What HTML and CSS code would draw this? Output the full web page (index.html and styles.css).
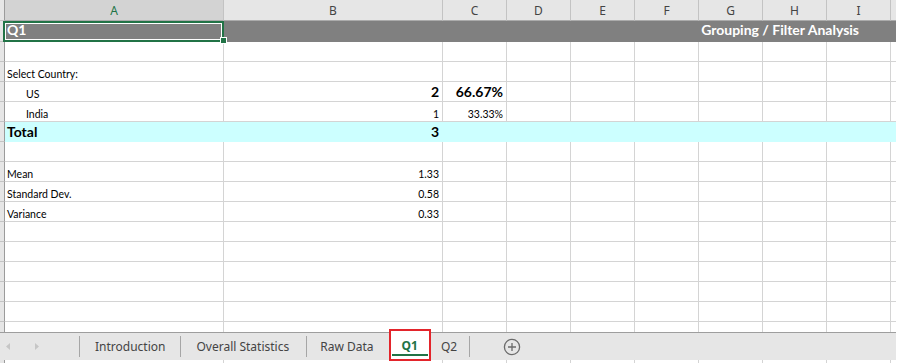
FILE: index.html
```html
<!DOCTYPE html>
<html lang="en">
<head>
  <meta charset="UTF-8" />
  <title>Q1 - Grouping / Filter Analysis</title>
  <link rel="stylesheet" href="styles.css">
</head>
<body>
  <div class="sheet">
    <!-- column headers -->
    <div class="row head">
      <div class="rh"></div>
      <div class="sel-col">A</div>
      <div>B</div>
      <div>C</div>
      <div>D</div>
      <div>E</div>
      <div>F</div>
      <div>G</div>
      <div>H</div>
      <div>I</div>
      <div></div>
    </div>

    <!-- title row -->
    <div class="row title">
      <div class="rh"></div>
      <div class="c sel">Q1</div>
      <div class="c span num">Grouping / Filter Analysis</div>
    </div>

    <div class="row"><div class="rh"></div><div class="c"></div><div class="c"></div><div class="c"></div><div class="c"></div><div class="c"></div><div class="c"></div><div class="c"></div><div class="c"></div><div class="c"></div><div class="c"></div></div>

    <div class="row"><div class="rh"></div><div class="c">Select Country:</div><div class="c"></div><div class="c"></div><div class="c"></div><div class="c"></div><div class="c"></div><div class="c"></div><div class="c"></div><div class="c"></div><div class="c"></div></div>

    <div class="row"><div class="rh"></div><div class="c indent">US</div><div class="c num big">2</div><div class="c num big">66.67%</div><div class="c"></div><div class="c"></div><div class="c"></div><div class="c"></div><div class="c"></div><div class="c"></div><div class="c"></div></div>

    <div class="row"><div class="rh"></div><div class="c indent">India</div><div class="c num">1</div><div class="c num">33.33%</div><div class="c"></div><div class="c"></div><div class="c"></div><div class="c"></div><div class="c"></div><div class="c"></div><div class="c"></div></div>

    <div class="row total"><div class="rh"></div><div class="c big">Total</div><div class="c num big">3</div><div class="c"></div><div class="c"></div><div class="c"></div><div class="c"></div><div class="c"></div><div class="c"></div><div class="c"></div><div class="c"></div></div>

    <div class="row"><div class="rh"></div><div class="c"></div><div class="c"></div><div class="c"></div><div class="c"></div><div class="c"></div><div class="c"></div><div class="c"></div><div class="c"></div><div class="c"></div><div class="c"></div></div>

    <div class="row"><div class="rh"></div><div class="c">Mean</div><div class="c num">1.33</div><div class="c"></div><div class="c"></div><div class="c"></div><div class="c"></div><div class="c"></div><div class="c"></div><div class="c"></div><div class="c"></div></div>

    <div class="row"><div class="rh"></div><div class="c">Standard Dev.</div><div class="c num">0.58</div><div class="c"></div><div class="c"></div><div class="c"></div><div class="c"></div><div class="c"></div><div class="c"></div><div class="c"></div><div class="c"></div></div>

    <div class="row"><div class="rh"></div><div class="c">Variance</div><div class="c num">0.33</div><div class="c"></div><div class="c"></div><div class="c"></div><div class="c"></div><div class="c"></div><div class="c"></div><div class="c"></div><div class="c"></div></div>

    <div class="row"><div class="rh"></div><div class="c"></div><div class="c"></div><div class="c"></div><div class="c"></div><div class="c"></div><div class="c"></div><div class="c"></div><div class="c"></div><div class="c"></div><div class="c"></div></div>
    <div class="row"><div class="rh"></div><div class="c"></div><div class="c"></div><div class="c"></div><div class="c"></div><div class="c"></div><div class="c"></div><div class="c"></div><div class="c"></div><div class="c"></div><div class="c"></div></div>
    <div class="row"><div class="rh"></div><div class="c"></div><div class="c"></div><div class="c"></div><div class="c"></div><div class="c"></div><div class="c"></div><div class="c"></div><div class="c"></div><div class="c"></div><div class="c"></div></div>
    <div class="row"><div class="rh"></div><div class="c"></div><div class="c"></div><div class="c"></div><div class="c"></div><div class="c"></div><div class="c"></div><div class="c"></div><div class="c"></div><div class="c"></div><div class="c"></div></div>
    <div class="row"><div class="rh"></div><div class="c"></div><div class="c"></div><div class="c"></div><div class="c"></div><div class="c"></div><div class="c"></div><div class="c"></div><div class="c"></div><div class="c"></div><div class="c"></div></div>
    <div class="row"><div class="rh"></div><div class="c"></div><div class="c"></div><div class="c"></div><div class="c"></div><div class="c"></div><div class="c"></div><div class="c"></div><div class="c"></div><div class="c"></div><div class="c"></div></div>
  </div>

  <!-- sheet tabs -->
  <div class="tabs">
    <div class="nav">
      <svg width="4" height="7" viewBox="0 0 4 7"><polygon points="4,0 0,3.5 4,7" fill="#c6c6c6"/></svg>
      <svg width="4" height="7" viewBox="0 0 4 7"><polygon points="0,0 4,3.5 0,7" fill="#c6c6c6"/></svg>
    </div>
    <span class="sep"></span>
    <div class="tab">Introduction</div>
    <span class="sep"></span>
    <div class="tab stats">Overall Statistics</div>
    <span class="sep"></span>
    <div class="tab raw">Raw Data</div>
    <div class="tab on">Q1</div>
    <div class="tab q2">Q2</div>
    <span class="sep"></span>
    <svg class="add" width="18" height="18" viewBox="0 0 18 18">
      <circle cx="9" cy="9" r="7.6" fill="none" stroke="#6b6b6b" stroke-width="1.3"/>
      <path d="M9 5v8M5 9h8" stroke="#6b6b6b" stroke-width="1.3"/>
    </svg>
  </div>

  <div class="row stub">
    <div class="rh"></div><div></div><div></div><div></div><div></div><div></div><div></div><div></div><div></div><div></div><div></div>
  </div>
</body>
</html>
```

FILE: styles.css
```css
body { margin: 0; background: #fff; font-family: Lato, "Liberation Sans", sans-serif; overflow: hidden; }

.sheet { height: 332px; overflow: hidden; }

.row { display: grid; grid-template-columns: 5px 219px 219px repeat(7, 64px) 5px; width: 896px; height: 20px; }
.row > div { box-sizing: border-box; min-width: 0; border-right: 1px solid #d4d4d4; border-bottom: 1px solid #d4d4d4; }
.row > div:last-child { border-right: none; }
.row > .rh { background: #e6e6e6; border-right-color: #9b9b9b; border-bottom-color: #c4c4c4; }

/* cells */
.c { display: flex; align-items: flex-end; padding: 0 3px 2px 2px; font-size: 10.5px; line-height: 1; color: #000; white-space: nowrap; }
.num { justify-content: flex-end; }
.big { font-size: 14px; font-weight: 700; }
.indent { padding-left: 21px; }

/* column headers */
.head { height: 21px; }
.head > div { display: flex; align-items: center; justify-content: center; background: #e6e6e6; border-right-color: #c3c3c3; border-bottom-color: #ababab; font: 12px "Noto Sans", sans-serif; color: #444; }
.head > .sel-col { background: #d3d3d3; color: #217346; }

/* grey title band */
.title { height: 21px; }
.title > .c { background: #808080; border-color: #808080; color: #fff; font-size: 14px; font-weight: 700; padding-bottom: 4px; }
.title > .span { grid-column: 3 / -1; padding-right: 37px; }

.sel { position: relative; }
.sel::before { content: ""; position: absolute; top: 0; left: -2px; right: -1px; bottom: -1px; border: 2px solid #217346; box-shadow: inset 0 0 0 1px #fff; }
.sel::after { content: ""; position: absolute; right: -4px; bottom: -3px; width: 5px; height: 5px; background: #217346; border: 1px solid #fff; }

/* highlighted total row */
.total > .c { background: #ccffff; border-color: #ccffff; }

/* sheet tabs */
.tabs { display: flex; align-items: center; width: 896px; height: 28px; box-sizing: border-box; border-top: 1px solid #9e9e9e; background: #e6e6e6; font: 12px "Noto Sans", sans-serif; color: #444; }
.nav { display: flex; align-items: center; gap: 25px; width: 79px; padding-left: 6px; box-sizing: border-box; }
.sep { width: 1px; height: 21px; background: #a6a6a6; }
.tab { padding: 0 15px; white-space: nowrap; }
.tab.stats { padding-right: 17px; }
.tab.raw { padding: 0 15px 0 13px; }
.tab.on { position: relative; align-self: flex-end; display: flex; align-items: center; height: 32px; margin-bottom: -1px; padding: 0 11px; box-sizing: border-box; border: 2px solid #e3242b; background: #fff; color: #217346; font-weight: 700; }
.tab.on::after { content: ""; position: absolute; left: 1px; right: 1px; bottom: 3px; height: 2px; background: #217346; }
.tab.q2 { padding: 0 12px 0 10px; }
.add { margin-left: 33px; }

.stub { height: 3px; }
.stub > div { border-bottom: none; }
```
